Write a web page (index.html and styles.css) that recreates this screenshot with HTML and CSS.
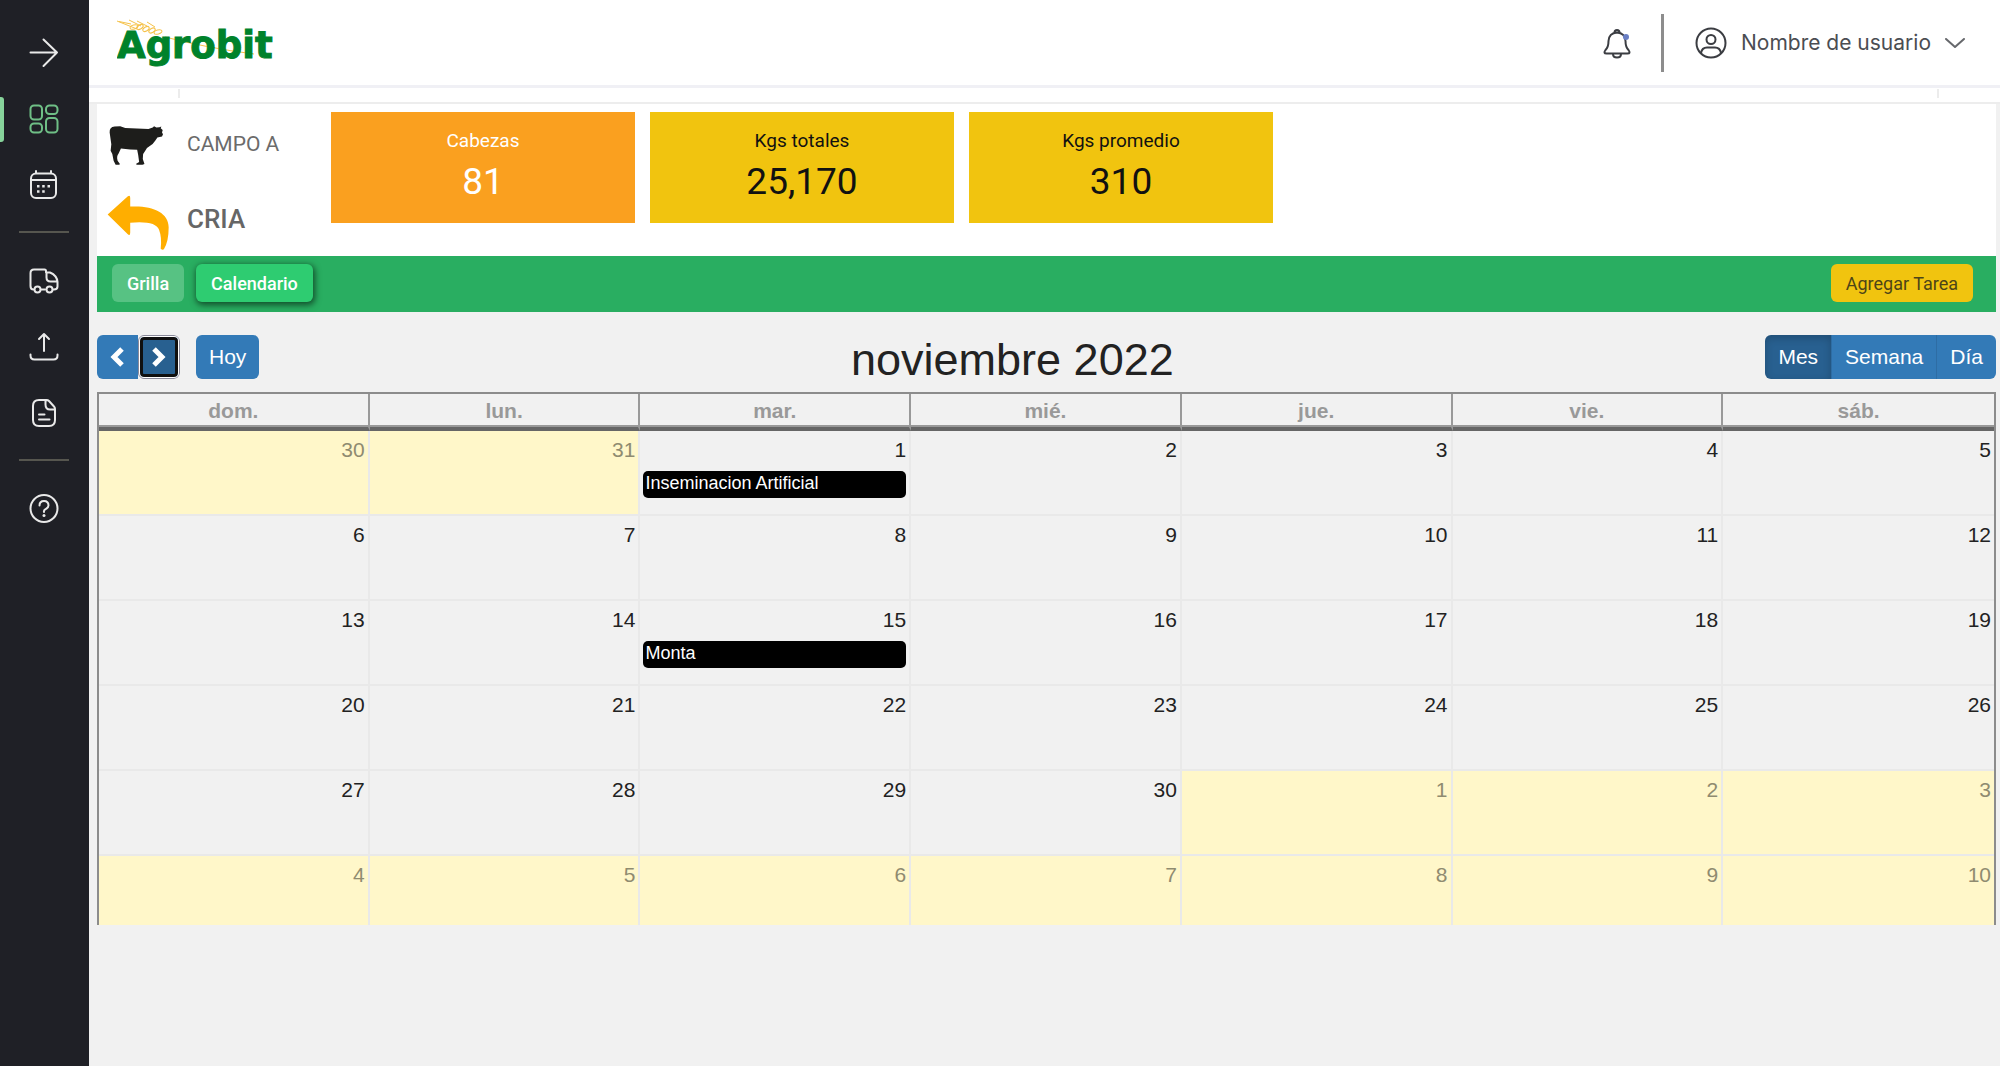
FILE: index.html
```html
<!DOCTYPE html>
<html lang="es">
<head>
<meta charset="utf-8">
<meta name="viewport" content="width=device-width, initial-scale=1">
<title>Agrobit - Calendario</title>
<link rel="stylesheet" href="styles.css">
</head>
<body>
<div class="app">
  <nav class="sidebar" aria-label="Principal">
    <button class="nav-item" type="button" aria-label="Expandir">
      <svg width="30" height="30" viewBox="0 0 30 30"><path d="M1.500 14.500H28M14.500 1.500L28 14.500L14.500 28"/></svg>
    </button>
    <a class="nav-item active" href="#" aria-label="Tablero">
      <svg width="30" height="30" viewBox="0 0 30 30"><rect x="1.500" y="1.500" width="11.500" height="14" rx="3.500"/><rect x="17" y="1.500" width="11.500" height="8.500" rx="3.500"/><rect x="1.500" y="19.500" width="11.500" height="9" rx="3.500"/><rect x="17" y="14" width="11.500" height="14.500" rx="3.500"/></svg>
    </a>
    <a class="nav-item" href="#" aria-label="Calendario">
      <svg width="30" height="30" viewBox="0 0 30 30"><rect x="2" y="3.500" width="25" height="24.500" rx="5"/><path d="M2 10h25M7 1v2M22 1v2"/><path class="solid" d="M8 15h2.500v2.500H8zM13.200 15h2.500v2.500h-2.500zM18.500 15h2.500v2.500h-2.500zM8 20.200h2.500v2.500H8zM13.200 20.200h2.500v2.500h-2.500z"/></svg>
    </a>
    <hr class="nav-divider">
    <a class="nav-item" href="#" aria-label="Transporte">
      <svg width="30" height="30" viewBox="0 0 30 30"><path d="M4.500 23.500Q1.500 23.500 1.500 20V7Q1.500 3.500 5 3.500H15.500Q17 3.500 17 5V6.500H21Q28 9.500 28.500 16V20.500Q28.500 23.500 25 23.500H24M12 23.500H16M17.500 6.500V11.500Q17.500 15.500 21.500 15.500H28.500"/><circle cx="8.500" cy="23.500" r="3"/><circle cx="20.500" cy="23.500" r="3"/></svg>
    </a>
    <a class="nav-item" href="#" aria-label="Subir">
      <svg width="30" height="30" viewBox="0 0 30 30"><path d="M15 19V2M10 7L15 2L20 7M1.500 22.500V23.500Q1.500 27.500 5.500 27.500H24.500Q28.500 27.500 28.500 23.500V22.500"/></svg>
    </a>
    <a class="nav-item" href="#" aria-label="Documentos">
      <svg width="30" height="30" viewBox="0 0 30 30"><path d="M10 2H17.500Q19 2 20 3L25 8.500Q26 9.500 26 11V22Q26 28 20 28H10Q4 28 4 22V8Q4 2 10 2ZM16.500 2V6.500Q16.500 11.500 21 11.500H26M10 16.500H15.500M10 21.500H20.500"/></svg>
    </a>
    <hr class="nav-divider">
    <a class="nav-item" href="#" aria-label="Ayuda">
      <svg width="30" height="30" viewBox="0 0 30 30"><circle cx="15" cy="14.500" r="13.500"/><path d="M10.500 11.500Q10.500 7 15 7T19.500 11.500Q19.500 13.500 17 14.800T15 18"/><circle class="solid" cx="15" cy="21.500" r="1.500"/></svg>
    </a>
  </nav>

  <div class="page">
    <header class="topbar">
      <a class="logo" href="#" aria-label="Agrobit">
        <svg width="160" height="50" viewBox="0 0 160 50">
          <path class="wheat" d="M0 3L20 11M48 19Q90 30 137 36M12 2L24 8M20 3L30 8M30 4L38 9M2 3.500L14 6"/>
          <text class="logo-text" x="0" y="40">Agrobit</text>
          <g class="grain"><ellipse cx="17" cy="9" rx="4" ry="2" transform="rotate(-15 17 9)"/><ellipse cx="23" cy="9" rx="3.500" ry="2" transform="rotate(-30 23 9)"/><ellipse cx="29" cy="11" rx="3.500" ry="2" transform="rotate(-30 29 11)"/><ellipse cx="35" cy="12.500" rx="3.500" ry="2" transform="rotate(-30 35 12.500)"/><ellipse cx="41" cy="14" rx="4" ry="2" transform="rotate(-15 41 14)"/></g>
        </svg>
      </a>
      <div class="account">
        <button class="icon-button" type="button" aria-label="Notificaciones">
          <svg width="30" height="32" viewBox="0 0 30 32"><path d="M12.500 5.500A2.500 2.500 0 1 1 17.500 5.500M15 5.500Q23 6 23.500 14Q23.500 20 26.500 23Q29 26.500 25.500 26.500H4.500Q1 26.500 3.500 23Q6.500 20 6.500 14Q7 6 15 5.500ZM11 27Q11 30.500 15 30.500T19 27"/><circle class="alert" cx="24" cy="10" r="3"/></svg>
        </button>
        <button class="user-button" type="button">
          <svg width="32" height="32" viewBox="0 0 32 32"><circle cx="16" cy="16" r="14.500"/><circle cx="16" cy="12.500" r="4.500"/><path d="M6 26Q7 20.500 12 20.500H20Q25 20.500 26 26"/></svg>
          <span>Nombre de usuario</span>
          <svg class="chevron" width="20" height="10" viewBox="0 0 20 10"><path d="M1 1L10 9L19 1"/></svg>
        </button>
      </div>
    </header>
    <div class="tab-strip"><span class="tick"></span><span class="tick"></span></div>

    <main class="content">
      <section class="summary">
        <div class="place">
          <svg class="cow" width="58" height="43" viewBox="20 20 175 128" aria-hidden="true"><path d="M28 45Q27 28 43 27L60 26L75 31L110 33L145 34L158 30L162 26L169 30L178 29L184 27L182 32L188 37L186 45L189 50L186 57L172 60L166 69Q158 82 148 86Q137 91 134 102L129 110L128 125L133 140L127 142L109 142L108 139L117 134L114 112L111 97L90 96L62 93L55 108Q48 116 52 130L59 140L57 142H46L40 130L36 110L31 100L33 80Z"/></svg>
          <h1 class="place-name">CAMPO A</h1>
          <a class="back" href="#" aria-label="Volver"><svg width="63" height="61" viewBox="20 218 190 184"><path d="M22 292L83 237Q90 232 90 242V268C155 264 206 285 206 330Q206 372 192 396Q188 401 182 395Q186 362 177 338Q166 310 90 317V346Q90 358 82 351Z"/></svg></a>
          <h2 class="place-stage">CRIA</h2>
        </div>
        <div class="cards">
          <div class="card card-orange"><span class="card-label">Cabezas</span><span class="card-value">81</span></div>
          <div class="card"><span class="card-label">Kgs totales</span><span class="card-value">25,170</span></div>
          <div class="card"><span class="card-label">Kgs promedio</span><span class="card-value">310</span></div>
        </div>
      </section>

      <div class="actions">
        <button class="btn btn-soft" type="button">Grilla</button>
        <button class="btn btn-current" type="button">Calendario</button>
        <button class="btn btn-add" type="button">Agregar Tarea</button>
      </div>

      <section class="calendar">
        <div class="toolbar">
          <div class="toolbar-side">
            <div class="group">
              <button class="cal-btn arrow" type="button" aria-label="Anterior"><svg width="15" height="20" viewBox="0 0 15 20"><path d="M12 2L4 10L12 18"/></svg></button>
              <button class="cal-btn arrow focused" type="button" aria-label="Siguiente"><svg width="15" height="20" viewBox="0 0 15 20"><path d="M3 2L11 10L3 18"/></svg></button>
            </div>
            <div class="group"><button class="cal-btn" type="button">Hoy</button></div>
          </div>
          <h2 class="month">noviembre 2022</h2>
          <div class="group">
            <button class="cal-btn pressed" type="button">Mes</button>
            <button class="cal-btn" type="button">Semana</button>
            <button class="cal-btn" type="button">Día</button>
          </div>
        </div>
        <table class="month-grid">
          <thead>
            <tr><th scope="col">dom.</th><th scope="col">lun.</th><th scope="col">mar.</th><th scope="col">mié.</th><th scope="col">jue.</th><th scope="col">vie.</th><th scope="col">sáb.</th></tr>
          </thead>
          <tbody>
            <tr><td class="other">30</td><td class="other">31</td><td>1<a class="event" href="#">Inseminacion Artificial</a></td><td>2</td><td>3</td><td>4</td><td>5</td></tr>
            <tr><td>6</td><td>7</td><td>8</td><td>9</td><td>10</td><td>11</td><td>12</td></tr>
            <tr><td>13</td><td>14</td><td>15<a class="event" href="#">Monta</a></td><td>16</td><td>17</td><td>18</td><td>19</td></tr>
            <tr><td>20</td><td>21</td><td>22</td><td>23</td><td>24</td><td>25</td><td>26</td></tr>
            <tr><td>27</td><td>28</td><td>29</td><td>30</td><td class="other">1</td><td class="other">2</td><td class="other">3</td></tr>
            <tr class="last"><td class="other">4</td><td class="other">5</td><td class="other">6</td><td class="other">7</td><td class="other">8</td><td class="other">9</td><td class="other">10</td></tr>
          </tbody>
        </table>
      </section>
    </main>
  </div>
</div>
</body>
</html>
```
FILE: styles.css
```css
* { box-sizing: border-box; }

body {
  margin: 0;
  background: #f1f1f1;
  color: #222;
  font-family: "Liberation Sans", Arial, sans-serif;
  font-size: 21px;
}

button { font: inherit; border: 0; padding: 0; background: none; cursor: pointer; }
h1, h2 { margin: 0; }
svg { display: block; flex: none; }

.app { display: flex; min-height: 100vh; }

/* Sidebar */
.sidebar {
  flex: none;
  width: 89px;
  padding: 20px 1px 0 0;
  display: flex;
  flex-direction: column;
  background: #1f2026;
}
.nav-item {
  position: relative;
  height: 66px;
  display: flex;
  align-items: center;
  justify-content: center;
  color: #e9e9e9;
}
.nav-item svg { fill: none; stroke: currentColor; stroke-width: 2; stroke-linecap: round; stroke-linejoin: round; }
.nav-item svg .solid { fill: currentColor; stroke: none; }
.nav-item.active { color: #6fbf86; }
.nav-item.active::before {
  content: "";
  position: absolute;
  left: 0;
  top: 11px;
  width: 4px;
  height: 45px;
  border-radius: 0 3px 3px 0;
  background: #87d39b;
}
.nav-divider { width: 50px; height: 2px; margin: 13px auto 15px; border: 0; background: #56564f; }

/* Header */
.page { flex: 1; min-width: 0; }
.topbar {
  height: 88px;
  padding: 0 35px 0 28px;
  display: flex;
  align-items: center;
  justify-content: space-between;
  background: #fff;
  border-bottom: 3px solid #f0f0f5;
}
.logo-text { font: bold 37px "DejaVu Sans", sans-serif; fill: #00822b; stroke: #00822b; stroke-width: 1; }
.wheat, .grain { fill: none; stroke: #f5c24a; stroke-width: 1; }
.account { display: flex; align-items: center; }
.account svg { fill: none; stroke: #3b3d42; stroke-width: 2; stroke-linecap: round; stroke-linejoin: round; }
.account svg .alert { fill: #6a7fc4; stroke: none; }
.icon-button { margin-right: 29px; }
.user-button {
  height: 58px;
  padding-left: 31px;
  display: flex;
  align-items: center;
  gap: 14px;
  border-left: 3px solid #8d8d8d;
  color: #4b4d52;
  font: 21px Inter, sans-serif;
}
.account .chevron { stroke-width: 2; stroke: #66686c; }
.tab-strip {
  height: 16px;
  padding: 1px 61px 0 89px;
  display: flex;
  justify-content: space-between;
  background: #fff;
  border-bottom: 2px solid #ededed;
}
.tick { height: 9px; border-left: 2px dashed #ececec; }

/* Summary */
.content { padding: 0 4px 0 8px; }
.summary { min-height: 152px; display: flex; background: #fff; font-family: Roboto, sans-serif; }
.place {
  width: 234px;
  padding: 6px 0 0 10px;
  display: grid;
  grid-template-columns: 80px 1fr;
  grid-template-rows: 1fr 1fr;
  row-gap: 4px;
  align-items: center;
}
.cow { fill: #1d1d1b; }
.back svg { fill: #ffae00; }
.place-name, .place-stage { padding-bottom: 4px; }
.place-name { font-size: 21px; font-weight: 400; color: #6b6b6b; }
.place-stage { font-size: 26px; font-weight: 500; color: #666; }
.cards { flex: 1; padding-top: 8px; display: flex; gap: 15px; align-items: flex-start; }
.card {
  flex: 0 1 304px;
  height: 111px;
  padding-top: 18px;
  display: flex;
  flex-direction: column;
  align-items: center;
  background: #f1c40f;
  color: #111;
}
.card-orange { background: #faa01f; color: #fff; }
.card-label { font-size: 19px; line-height: 22px; }
.card-value { font-size: 37px; line-height: 60px; }

/* Action bar */
.actions {
  height: 56px;
  padding: 0 23px 2px 15px;
  display: flex;
  align-items: center;
  gap: 12px;
  background: #29ae61;
}
.btn { height: 38px; padding: 0 15px; border-radius: 6px; color: #fff; font: 500 18px Roboto, sans-serif; }
.btn-soft { background: #57c283; }
.btn-current { background: #2ecc71; box-shadow: 1px 2px 6px 1px #124d2b; }
.btn-add { margin-left: auto; background: #f1c40f; color: #4d4418; font-weight: 400; }

/* Calendar */
.toolbar { padding: 23px 0 13px; display: flex; align-items: center; justify-content: space-between; }
.toolbar-side { display: flex; gap: 16px; }
.group { display: flex; border-radius: 6px; overflow: hidden; }
.cal-btn { height: 44px; padding: 0 13px; background: #337ab7; color: #fff; line-height: 44px; }
.cal-btn + .cal-btn { border-left: 1px solid #2e6da4; }
.cal-btn svg { fill: none; stroke: #fff; stroke-width: 5; }
.cal-btn.pressed { background: #286090; box-shadow: inset 0 3px 8px rgba(0, 0, 0, 0.2); }
.cal-btn.arrow { width: 41px; }
.cal-btn.focused {
  width: 42px;
  background: #286090;
  border: 2px solid #fff;
  border-radius: 6px;
  box-shadow: inset 0 0 0 3px #101010;
  outline: 1px solid #8a8a9a;
  outline-offset: -1px;
  padding: 0 11px;
}
.month { padding-top: 6px; font-size: 45px; line-height: 38px; font-weight: 400; }

.month-grid {
  width: 100%;
  table-layout: fixed;
  border-collapse: separate;
  border-spacing: 0;
  border: 2px solid #8c8c8c;
  border-bottom: 0;
}
.month-grid th {
  height: 37px;
  padding: 0;
  border-right: 2px solid #999;
  border-bottom: 4px solid #666;
  box-shadow: inset 0 -2px #999;
  color: #999;
  line-height: 30px;
}
.month-grid td {
  height: 85px;
  padding: 7px 3px 0;
  border-right: 2px solid #e9e9e9;
  border-bottom: 2px solid #e9e9e9;
  vertical-align: top;
  text-align: right;
  line-height: 24px;
}
.month-grid th:last-child, .month-grid td:last-child { border-right: 0; }
.month-grid td.other { background: #fff7c9; color: #8f8b70; }
.month-grid .last td { height: 69px; border-bottom: 0; }
.event {
  display: block;
  height: 27px;
  margin-top: 9px;
  padding-left: 2px;
  border-radius: 5px;
  background: #000;
  color: #fff;
  font-size: 18px;
  line-height: 24px;
  text-align: left;
  text-decoration: none;
}
```
